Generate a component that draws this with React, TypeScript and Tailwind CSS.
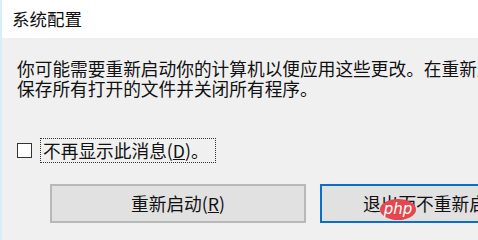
import React from "react";

const font = { fontFamily: '"Noto Sans CJK SC", "Noto Sans", sans-serif' };

export default function App() {
  return (
    <div
      className="w-[478px] h-[240px] overflow-hidden flex flex-col border-l-2 border-[#d6eef7] text-[#111] bg-[#f0f0f0]"
      style={font}
    >
      <div className="h-[38px] shrink-0 bg-white flex items-center pl-[10px] text-[17.5px] leading-none">
        系统配置
      </div>
      <div className="flex-1 pl-[15px] pt-[20px] flex flex-col overflow-hidden">
        <div className="text-[17.7px] leading-[20px] whitespace-nowrap">
          <div>你可能需要重新启动你的计算机以便应用这些更改。在重新启动之前，请</div>
          <div>保存所有打开的文件并关闭所有程序。</div>
        </div>
        <div className="mt-[40px] h-[25px] flex items-center">
          <div className="w-[15px] h-[15px] border-[1.5px] border-[#333] bg-white shrink-0" />
          <div className="ml-[8px] h-[25px] flex items-center pl-[2px] pr-[6px] border border-dotted border-[#333] text-[17.7px] leading-none whitespace-nowrap">
            不再显示此消息(<span className="underline">D</span>)。
          </div>
        </div>
        <div className="mt-[21px] flex gap-[14px] ml-[33px]">
          <div className="w-[256px] h-[39px] shrink-0 border-2 border-[#b8b8b8] bg-[#e1e1e1] flex items-center justify-center text-[17.7px] leading-none">
            重新启动(<span className="underline">R</span>)
          </div>
          <div className="relative w-[256px] h-[39px] shrink-0 border-2 border-[#0a6fc9] bg-[#e1e1e1] flex items-center justify-start pl-[41px] text-[17.7px] leading-none whitespace-nowrap">
            退出而不重新启动(<span className="underline">X</span>)
            <div className="absolute left-[58px] top-[13px] w-[36px] h-[21px] rounded-[50%] bg-[#e4474d] flex items-center justify-center">
              <span className="text-white italic text-[15px] leading-none" style={{ fontFamily: '"DejaVu Sans", sans-serif' }}>
                php
              </span>
            </div>
          </div>
        </div>
      </div>
    </div>
  );
}
